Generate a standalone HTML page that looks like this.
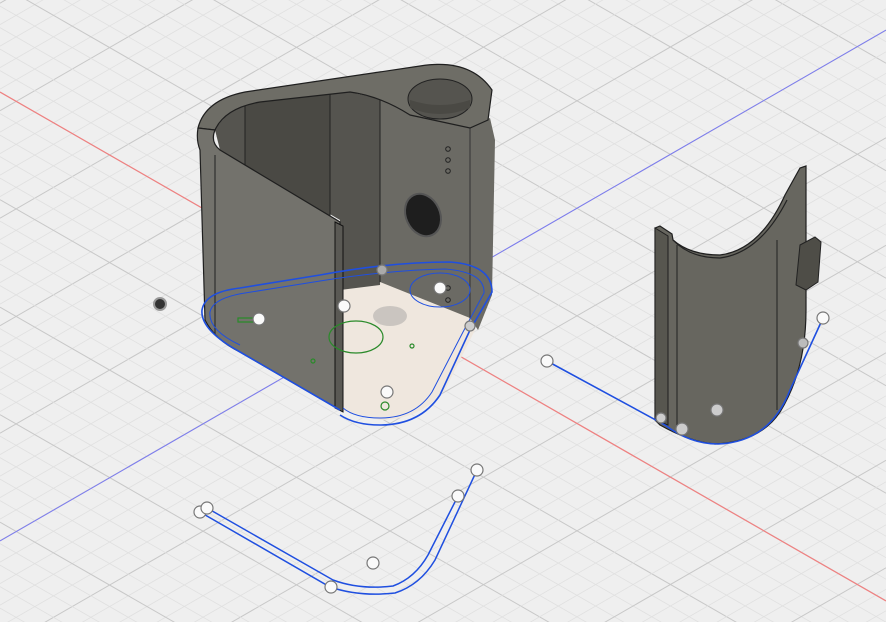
<!DOCTYPE html>
<html><head><meta charset="utf-8"><style>
html,body{margin:0;padding:0;width:886px;height:622px;overflow:hidden;background:#efefef}
svg{display:block;position:absolute;left:0;top:0}
</style></head><body>
<svg id="s" width="886" height="622" viewBox="0 0 886 622" xmlns="http://www.w3.org/2000/svg">
<rect width="886" height="622" fill="#efefef"/>
<g id="grid"></g>
<line x1="0" y1="92" x2="886" y2="601" stroke="#f08080" stroke-width="1.2"/>
<line x1="0" y1="541" x2="886" y2="30" stroke="#7b7bf0" stroke-width="1"/>

<path d="M340 285 L380 275 Q420 270 470 318 L475 330 L445 390 Q420 420 380 420 L340 410 Z" fill="#efe7de"/>
<path d="M215 130 Q230 105 260 100 L330 88 L350 92 L385 100 L380 285 L340 290 L340 220 L220 150 Z" fill="#55544f"/>
<path d="M245 105 L330 88 L330 250 L245 200 Z" fill="#4a4944"/>
<line x1="245" y1="104" x2="245" y2="200" stroke="#222" stroke-width="1"/>
<line x1="330" y1="88" x2="330" y2="230" stroke="#222" stroke-width="1"/>
<path d="M380 95 L470 125 L490 118 L495 140 L492 295 L478 330 L470 318 L380 282 Z" fill="#6b6a64"/>
<line x1="380" y1="95" x2="380" y2="282" stroke="#222" stroke-width="1"/>
<line x1="470" y1="125" x2="470" y2="320" stroke="#333" stroke-width="1"/>
<path d="M198 128 Q205 100 245 92 L420 66 Q470 58 492 90 L488 120 L470 128 L410 115 Q380 96 350 92 L260 102 Q225 108 215 130 Z" fill="#6e6d66" stroke="#1f1f1f" stroke-width="1.2"/>
<ellipse cx="440" cy="99" rx="32" ry="20" fill="#55544f" stroke="#222" stroke-width="1"/>
<path d="M410 100 Q440 110 470 100 L470 108 Q440 120 410 108Z" fill="#4a4944"/>
<ellipse cx="423" cy="215" rx="17" ry="22" transform="rotate(-25 423 215)" fill="#1e1e1e" stroke="#555" stroke-width="2"/>
<g fill="none" stroke="#222" stroke-width="1">
<circle cx="448" cy="149" r="2.3"/><circle cx="448" cy="160" r="2.3"/><circle cx="448" cy="171" r="2.3"/>
<circle cx="448" cy="288" r="2.3"/><circle cx="448" cy="300" r="2.3"/>
</g>
<path d="M198 128 Q196 140 200 150 L205 320 Q215 340 240 352 L340 410 L340 222 L220 150 Q210 142 215 130 Z" fill="#73726c" stroke="#1f1f1f" stroke-width="1.2"/>
<line x1="215" y1="155" x2="215" y2="335" stroke="#222" stroke-width="1"/>
<path d="M335 222 L343 226 L343 412 L335 408 Z" fill="#5a5954" stroke="#111" stroke-width="1"/>

<g fill="none" stroke="#1f4fe0" stroke-width="1.6">
<path d="M340 410 L240 352 Q200 330 202 310 Q205 292 240 288 L320 275 Q390 262 450 262 Q492 265 492 292 L470 330 L440 395 Q420 425 380 425 Q355 425 340 415"/>
<path d="M240 345 Q208 330 210 312 Q213 298 245 293 L320 281 Q390 270 445 269 Q485 272 484 293 L463 332 L432 392 Q415 418 380 418 Q355 418 343 408" stroke-width="1"/>
<ellipse cx="440" cy="290" rx="30" ry="17" stroke-width="1"/>
</g>
<g fill="none" stroke="#2a8a2a" stroke-width="1.2">
<ellipse cx="356" cy="337" rx="27" ry="16"/>
<circle cx="412" cy="346" r="2"/><circle cx="313" cy="361" r="2"/>
<path d="M238 318 L258 318 L258 322 L238 322Z"/>
<circle cx="385" cy="406" r="4"/>
</g>
<ellipse cx="390" cy="316" rx="17" ry="10" fill="#c0bdb8" opacity="0.8"/>
<g fill="#fafafa" stroke="#777" stroke-width="1.2">
<circle cx="259" cy="319" r="6"/><circle cx="344" cy="306" r="6"/><circle cx="387" cy="392" r="6"/>
<circle cx="440" cy="288" r="6"/><circle cx="470" cy="326" r="5" fill="#ccc"/>
<circle cx="382" cy="270" r="5" fill="#aaa"/>
</g>
<circle cx="160" cy="304" r="6" fill="#333" stroke="#999" stroke-width="2"/>

<path d="M655 228 L660 226 L672 234 L673 240 Q690 255 720 255 Q760 250 785 195 L800 168 L806 166 L806 310 Q806 370 780 412 Q760 442 715 444 Q690 442 660 425 L655 420 Z" fill="#67665f" stroke="#1f1f1f" stroke-width="1.2"/>
<path d="M655 228 L668 236 L668 425 L655 420 Z" fill="#57564f" stroke="#1f1f1f" stroke-width="1"/>
<line x1="677" y1="245" x2="677" y2="430" stroke="#222" stroke-width="1"/>
<line x1="777" y1="240" x2="777" y2="410" stroke="#222" stroke-width="1"/>
<path d="M673 240 Q690 258 720 258 Q760 253 787 200" fill="none" stroke="#222" stroke-width="1.2"/>
<path d="M800 245 L815 237 L821 242 L818 282 L806 290 L796 285 Z" fill="#4e4d47" stroke="#222" stroke-width="1"/>
<g fill="none" stroke="#1f4fe0" stroke-width="1.6">
<path d="M547 361 L665 425 Q690 444 718 444 Q770 442 790 390 L823 318"/>
</g>
<g fill="#fafafa" stroke="#777" stroke-width="1.2">
<circle cx="547" cy="361" r="6"/><circle cx="823" cy="318" r="6"/>
<circle cx="717" cy="410" r="6" fill="#ccc"/><circle cx="682" cy="429" r="6" fill="#ccc"/>
<circle cx="661" cy="418" r="5" fill="#ccc"/><circle cx="803" cy="343" r="5" fill="#bbb"/>
</g>

<g fill="none" stroke="#1f4fe0" stroke-width="1.5">
<path d="M200 512 L330 587 Q360 597 395 593 Q420 585 435 560 L477 470"/>
<path d="M207 508 L333 580 Q360 590 393 586 Q415 578 428 555 L458 496"/>
</g>
<g fill="#fafafa" stroke="#777" stroke-width="1.2">
<circle cx="200" cy="512" r="6"/><circle cx="207" cy="508" r="6"/><circle cx="331" cy="587" r="6"/>
<circle cx="373" cy="563" r="6"/><circle cx="458" cy="496" r="6"/><circle cx="477" cy="470" r="6"/>
</g>
</svg>
<script>
(function(){
var g=document.getElementById('grid'),out='';
var cx=390,cy=316;
for(var k=-60;k<=60;k++){
 var d=k*21.5, major=(k%5===0);
 var col=major?'#c8c8c8':'#e0e0e0', w=major?1:0.8;
 var y0=cy+d-0.574*cx, y1=y0+0.574*886;
 out+='<line x1="0" y1="'+y0+'" x2="886" y2="'+y1+'" stroke="'+col+'" stroke-width="'+w+'"/>';
 var z0=cy+d+0.576*cx, z1=z0-0.576*886;
 out+='<line x1="0" y1="'+z0+'" x2="886" y2="'+z1+'" stroke="'+col+'" stroke-width="'+w+'"/>';
}
g.innerHTML=out;
})();
</script>
</body></html>
